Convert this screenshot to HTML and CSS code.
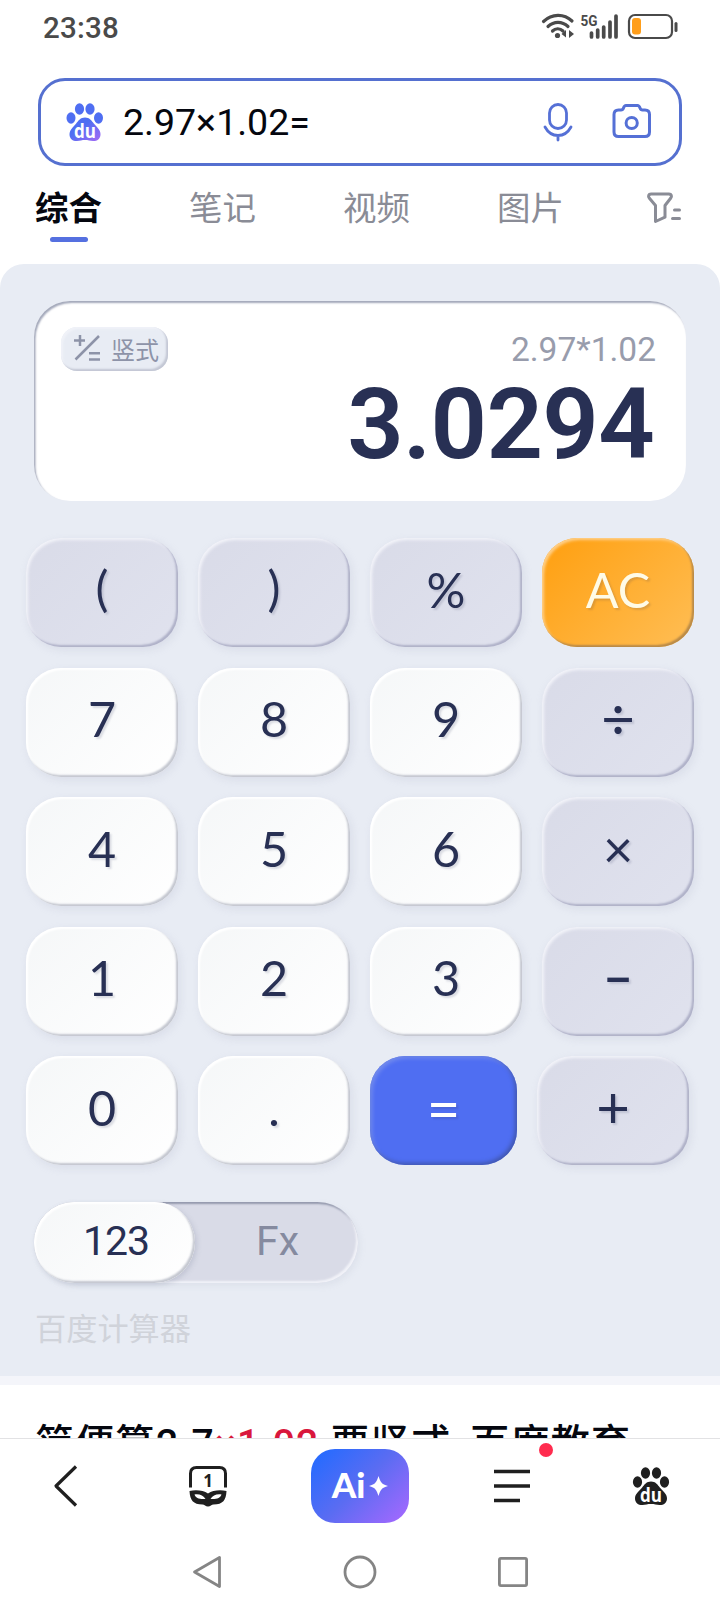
FILE: index.html
```html
<!DOCTYPE html>
<html lang="zh-CN">
<head>
    <meta charset="UTF-8">
    <meta name="viewport" content="width=device-width, initial-scale=1.0">
    <title>2.97×1.02= - 百度</title>
    <link rel="stylesheet" href="styles.css">
</head>
<body>
    <div class="app">
        <header class="status-bar">
            <span class="clock">23:38</span>
            <svg class="status-icons" width="140" height="30" viewBox="0 0 140 30">
                <g fill="none" stroke="#4a4a4a" stroke-width="3.2" stroke-linecap="round">
                    <path d="M2.5 9.5C11 1.5 23 1.5 31 9"/>
                    <path d="M7 14.5c6-5.5 14-5.5 20 0"/>
                    <path d="M11.500 19c3-3 7.500-3 10.500 0"/>
                </g>
                <circle cx="16.500" cy="23.500" r="2.600" fill="#4a4a4a"/>
                <path d="M25 18v7.500l-4.500-3.500zM28 18l5 4-5 4z" fill="#4a4a4a"/>
                <text class="net-label" x="39.500" y="13.500" textLength="17" lengthAdjust="spacingAndGlyphs">5G</text>
                <path d="M50.500 21v4M56.700 18v7M62.700 15v10M69 10v15M75 4v21" stroke="#4a4a4a" stroke-width="3.700" stroke-linecap="round"/>
                <rect x="88" y="3" width="43" height="23" rx="6" fill="none" stroke="#4a4a4a" stroke-width="2.200"/>
                <rect x="91" y="6" width="9" height="16.500" rx="3" fill="#ff9e1b"/>
                <path d="M135 11.500v7" stroke="#4a4a4a" stroke-width="3" stroke-linecap="round"/>
            </svg>
        </header>

        <div class="search-box">
            <svg class="paw" width="38" height="40" viewBox="0 0 38 40">
                <defs>
                    <linearGradient id="pawFill" x1="0" y1="0" x2="1" y2="1">
                        <stop offset="0.4" stop-color="#4f6ef2"/>
                        <stop offset="1" stop-color="#a56af5"/>
                    </linearGradient>
                </defs>
                <g fill="#4f6ef2">
                    <ellipse cx="13.500" cy="7" rx="4.600" ry="5.800"/>
                    <ellipse cx="24" cy="7" rx="4.600" ry="5.800"/>
                    <ellipse cx="5" cy="16" rx="4.500" ry="5.700"/>
                    <ellipse cx="32.500" cy="16" rx="4.500" ry="5.700"/>
                </g>
                <path d="M19 15.500c4.500 0 6.500 3 9 6.200 3 3.500 6.500 6.300 6.500 10.500 0 5-3.800 7-7.500 6.800-3-.2-5-.9-8-.9s-5 .7-8 .9c-3.700.2-7.500-1.800-7.500-6.800 0-4.200 3.500-7 6.500-10.500 2.500-3.200 4.500-6.200 9-6.200z" fill="url(#pawFill)"/>
                <text class="paw-text" x="8" y="35.500" textLength="22" lengthAdjust="spacingAndGlyphs">du</text>
            </svg>
            <span class="query">2.97×1.02=</span>
            <svg class="mic" width="32" height="40" viewBox="0 0 32 40">
                <g fill="none" stroke="#5570d6" stroke-width="2.800" stroke-linecap="round">
                    <rect x="7.500" y="2.500" width="17" height="24" rx="8.500"/>
                    <path d="M3 25c3 5.500 7.500 8.500 13 8.500S26 30.500 29 25M16 33.500v4.500"/>
                </g>
            </svg>
            <svg class="camera" width="40" height="38" viewBox="0 0 40 38">
                <g fill="none" stroke="#5570d6" stroke-width="3" stroke-linejoin="round">
                    <path d="M6.500 7H9c1.500 0 2-.5 2.500-2S12.500 2.500 14 2.500h11.500c1.500 0 2 1 2.500 2.500s1 2 2.500 2H33c3 0 4.500 1.500 4.500 4.500v17.500c0 3-1.500 4.500-4.500 4.500H6.500c-3 0-4.500-1.500-4.500-4.500V11.500C2 8.500 3.500 7 6.500 7z"/>
                    <circle cx="19.700" cy="20" r="5.600"/>
                </g>
            </svg>
        </div>

        <nav class="tabs">
            <span class="tab active">综合</span>
            <span class="tab">笔记</span>
            <span class="tab">视频</span>
            <span class="tab">图片</span>
            <svg class="filter" width="36" height="34" viewBox="0 0 36 34">
                <g fill="none" stroke="#8a8c96" stroke-width="3" stroke-linecap="round" stroke-linejoin="round">
                    <path d="M5 3h18c2.500 0 3 2.300 1.800 4L19 14.500v11.700l-9.500 4.300v-16L3.200 7C2 5.300 2.500 3 5 3z"/>
                    <path d="M28.500 19h5M26.500 27.500h7"/>
                </g>
            </svg>
        </nav>

        <main class="calculator">
            <section class="display">
                <div class="display-top">
                    <span class="chip">
                        <svg width="28" height="28" viewBox="0 0 28 28">
                            <path d="M7 1v11M1 6.500h11M2.500 25.500L26 2M16 19.300h11M16 25.500h11" fill="none" stroke="#8d93a8" stroke-width="2.500"/>
                        </svg>
                        竖式
                    </span>
                    <span class="expression">2.97*1.02</span>
                </div>
                <div class="result">3.0294</div>
            </section>

            <section class="keypad">
                <div class="key-row">
                    <span class="key op paren">(</span>
                    <span class="key op paren">)</span>
                    <span class="key op">%</span>
                    <span class="key clear">AC</span>
                </div>
                <div class="key-row">
                    <span class="key">7</span>
                    <span class="key">8</span>
                    <span class="key">9</span>
                    <span class="key op sign">÷</span>
                </div>
                <div class="key-row">
                    <span class="key">4</span>
                    <span class="key">5</span>
                    <span class="key">6</span>
                    <span class="key op times">×</span>
                </div>
                <div class="key-row">
                    <span class="key">1</span>
                    <span class="key">2</span>
                    <span class="key">3</span>
                    <span class="key op minus">−</span>
                </div>
                <div class="key-row">
                    <span class="key">0</span>
                    <span class="key">.</span>
                    <span class="key equals sign">=</span>
                    <span class="key op sign">+</span>
                </div>
            </section>

            <div class="mode-switch">
                <span class="mode selected">123</span>
                <span class="mode fx">Fx</span>
            </div>
            <div class="source">百度计算器</div>
        </main>

        <section class="next-result">
            <h3>简便算2.7<em>×1.02</em> 要竖式_百度教育</h3>
        </section>

        <nav class="toolbar">
            <svg class="tool" width="26" height="44" viewBox="0 0 26 44">
                <path d="M23 2.500L3 22l20 19.500" fill="none" stroke="#1f1f1f" stroke-width="3.200" stroke-linejoin="round"/>
            </svg>
            <svg class="tool" width="40" height="42" viewBox="0 0 40 42">
                <path d="M2.500 22.500V8.500c0-4 2-6 6-6h23c4 0 6 2 6 6v14" fill="none" stroke="#1f1f1f" stroke-width="3"/>
                <text class="tab-count" x="20" y="22" text-anchor="middle">1</text>
                <path fill-rule="evenodd" fill="#1f1f1f" d="M1.500 26c7-1.500 14-.5 18.500 2.500 4.500-3 11.500-4 18.500-2.500-.5 9-3.500 13.500-13 13.500-2 0-3 2-5.500 2s-3.500-2-5.500-2C5 39.500 2 35 1.500 26zM6.500 29.500c1 3.500 5 5 11 4.500C15.500 30.500 11 28.500 6.500 29.500zM33.500 29.500c-1 3.500-5 5-11 4.500 2-3.500 6.500-5.500 11-4.500z"/>
            </svg>
            <span class="ai-button">
                <span class="ai-text">Ai</span>
                <svg width="19" height="20" viewBox="0 0 19 20">
                    <path d="M9.500 0c1.800 6 3 8.200 9.500 10-6.500 1.800-7.700 4-9.500 10C7.700 14 6.500 11.800 0 10 6.500 8.200 7.700 6 9.500 0z" fill="#fff"/>
                </svg>
            </span>
            <span class="menu">
                <svg width="36" height="34" viewBox="0 0 36 34">
                    <path d="M0 2.500h36M0 17h36M0 31.500h26" stroke="#1f1f1f" stroke-width="3.600"/>
                </svg>
                <i class="badge"></i>
            </span>
            <svg class="tool home" width="38" height="40" viewBox="0 0 38 40">
                <g fill="#1f1f1f">
                    <ellipse cx="13.500" cy="7" rx="4.600" ry="5.800"/>
                    <ellipse cx="24.500" cy="7" rx="4.600" ry="5.800"/>
                    <ellipse cx="5.500" cy="16" rx="4.600" ry="5.700"/>
                    <ellipse cx="32.500" cy="16" rx="4.600" ry="5.700"/>
                    <path d="M19 15.500c4.500 0 6.500 3 9 6.200 3 3.500 7 6.300 7 10.500 0 5-3.800 7-7.500 6.800-3-.2-5-.9-8.500-.9s-5.500.7-8.500.9C6.800 39.200 3 37.200 3 32.200c0-4.200 4-7 7-10.500 2.500-3.200 4.500-6.200 9-6.200z"/>
                </g>
                <text class="paw-text" x="8" y="35.500" textLength="22" lengthAdjust="spacingAndGlyphs">du</text>
            </svg>
        </nav>

        <footer class="system-nav">
            <svg width="32" height="36" viewBox="0 0 32 36">
                <path d="M28.500 3.500v29L3.500 18z" fill="none" stroke="#858585" stroke-width="2.800" stroke-linejoin="round"/>
            </svg>
            <svg width="36" height="36" viewBox="0 0 36 36">
                <circle cx="18" cy="18" r="15" fill="none" stroke="#858585" stroke-width="2.800"/>
            </svg>
            <svg width="32" height="32" viewBox="0 0 32 32">
                <rect x="2.400" y="2.400" width="27.200" height="27.200" rx="1.500" fill="none" stroke="#858585" stroke-width="2.800"/>
            </svg>
        </footer>
    </div>
</body>
</html>
```
FILE: styles.css
```css
:root {
    --blue: #4f6ef2;
    --border-blue: #5570d0;
    --ink: #283054;
    --muted: #8a8c96;
    --panel: #e8ecf4;
    --cjk: "Noto Sans CJK SC", sans-serif;
}

* {
    box-sizing: border-box;
}

body {
    margin: 0;
    background: #fff;
    font-family: Roboto, var(--cjk);
}

svg {
    display: block;
    flex: none;
}

.app {
    width: 720px;
    height: 1612px;
    display: flex;
    flex-direction: column;
    overflow: hidden;
}

/* status bar */
.status-bar {
    height: 78px;
    padding: 12px 39px 0 43px;
    display: flex;
    justify-content: space-between;
}

.clock {
    font-size: 29.500px;
    line-height: 32px;
    font-weight: 500;
    letter-spacing: 0.2px;
    color: #4a4a4a;
}

.net-label {
    font: 700 15px Roboto, sans-serif;
    fill: #4a4a4a;
}

/* search */
.search-box {
    height: 88px;
    margin: 0 38px;
    padding: 0 27px 0 25px;
    border: 3px solid var(--border-blue);
    border-radius: 27px;
    display: flex;
    align-items: center;
    flex: none;
}

.paw-text {
    font: 700 19px "Open Sans", sans-serif;
    fill: #fff;
}

.query {
    flex: 1;
    margin-left: 19px;
    font-size: 37.500px;
    color: #05070f;
}

.camera {
    margin-left: 38px;
}

/* tabs */
.tabs {
    height: 98px;
    padding: 16px 38px 0 35px;
    display: flex;
    gap: 87px;
    flex: none;
}

.tab {
    height: 60px;
    flex: none;
    font-family: var(--cjk);
    font-size: 33.500px;
    line-height: 48px;
    white-space: nowrap;
    color: var(--muted);
}

.tab.active {
    font-weight: 700;
    color: #05070f;
}

.tab.active::after {
    content: "";
    display: block;
    width: 38px;
    height: 5px;
    margin: 7px auto 0;
    border-radius: 3px;
    background: #5570e0;
}

.filter {
    margin: 9px 0 0 -5px;
}

/* calculator */
.calculator {
    height: 1112px;
    padding: 37px 26px 0;
    border-radius: 24px 24px 0 0;
    background: var(--panel);
    flex: none;
}

.display {
    height: 200px;
    margin: 0 8px;
    padding: 26px 30px 0 27px;
    border-radius: 36px;
    background: #fff;
    box-shadow: inset 1.500px 2px 2px #a3a8ba;
}

.display-top {
    display: flex;
    justify-content: space-between;
}

.chip {
    width: 107px;
    height: 44px;
    padding: 0 0 2px 12px;
    border-radius: 16px;
    background: var(--panel);
    box-shadow: inset -2px -2px 2px #c3c7d4, inset 2px 2px 2px #f0f2f8;
    display: flex;
    align-items: center;
    gap: 10px;
    font-family: var(--cjk);
    font-size: 24px;
    color: #8d93a8;
}

.expression {
    font-size: 33.500px;
    line-height: 46px;
    color: #989cac;
}

.result {
    margin: 4px 2px 0 0;
    font-size: 99px;
    line-height: 94px;
    font-weight: 600;
    letter-spacing: -0.7px;
    text-align: right;
    color: var(--ink);
}

.keypad {
    margin-top: 37px;
    display: flex;
    flex-direction: column;
    gap: 20.500px;
}

.key-row {
    display: flex;
    gap: 20px;
}

.key {
    width: 152px;
    height: 109px;
    border-radius: 35px;
    background: linear-gradient(135deg, #f5f7f8, #fff);
    box-shadow: inset -2px -2px 2px #c4c7d0, inset 2px 2px 2px #fff, 2px 3px 8px rgba(160, 165, 190, 0.2);
    display: flex;
    align-items: center;
    justify-content: center;
    font-family: Lato, sans-serif;
    font-size: 48.500px;
    line-height: 1;
    padding-bottom: 7px;
    color: var(--ink);
    text-shadow: 2px 2px 2px rgba(40, 48, 84, 0.15);
}

.key.op {
    background: linear-gradient(135deg, #d9dbe8, #e0e2ee);
    box-shadow: inset -2px -2px 2px #afb1c8, inset 2px 2px 3px #f2f3f9, 2px 3px 8px rgba(160, 165, 190, 0.2);
}

.key.paren {
    padding-bottom: 11px;
}

.key.sign {
    font-size: 58px;
    padding-bottom: 9px;
}

.key.times {
    font-size: 52px;
    padding-bottom: 7px;
}

.key.minus {
    font-weight: 700;
}

.key.clear {
    background: linear-gradient(135deg, #ff9f0f, #ffbe55);
    box-shadow: inset -2px -2px 2px #b98a48, inset 2px 2px 3px #ffd08a;
    color: #fffbe6;
}

.key.equals {
    width: 147px;
    padding-bottom: 5px;
    background: var(--blue);
    box-shadow: inset -2px -2px 4px #4056ad, inset 2px 2px 4px #7890ee;
    color: #fff;
}

.mode-switch {
    width: 324px;
    height: 81px;
    margin: 37px 0 0 8px;
    border-radius: 41px;
    background: #d9dbe7;
    box-shadow: inset -2px -2px 2px #f1f2f8, inset 1px 2px 2px #9499ad, 2px 3px 6px rgba(160, 165, 190, 0.15);
    display: flex;
}

.mode {
    width: 161px;
    border-radius: 41px;
    font-size: 41px;
    line-height: 79px;
    text-align: center;
    color: #858a9f;
}

.mode.fx {
    padding-left: 4px;
}

.mode.selected {
    padding-left: 3px;
    background: linear-gradient(135deg, #f5f7f8, #fff);
    box-shadow: inset -2px -2px 2px #c4c7d0, inset 2px 2px 2px #fff, 2px 2px 5px rgba(140, 145, 170, 0.3);
    color: var(--ink);
    letter-spacing: -1px;
}

.source {
    margin: 21px 0 0 9px;
    font-family: var(--cjk);
    font-size: 31.200px;
    line-height: 46px;
    color: #d0d3da;
}

/* the next search result is cut off by the toolbar */
.next-result {
    height: 62px;
    padding: 0 35px;
    border-top: 9px solid #f4f5fa;
    overflow: hidden;
    flex: none;
}

.next-result h3 {
    margin: 30px 0 0;
    font-family: Roboto, var(--cjk);
    font-size: 39px;
    line-height: 58px;
    font-weight: 500;
    letter-spacing: 1.300px;
    white-space: nowrap;
    color: #05070f;
}

.next-result em {
    font-style: normal;
    color: #d9173c;
}

/* browser toolbar */
.toolbar {
    height: 96px;
    padding-bottom: 2px;
    border-top: 1px solid #e2e2e4;
    display: grid;
    grid-template-columns: 132px 152px 152px 152px 126px;
    align-items: center;
    justify-items: center;
    flex: none;
}

.tab-count {
    font: 700 17px "Noto Sans", sans-serif;
    fill: #1f1f1f;
}

.ai-button {
    width: 98px;
    height: 74px;
    border-radius: 24px;
    background: linear-gradient(135deg, #246bff 5%, #5b6cf2 50%, #a968ff);
    display: flex;
    align-items: center;
    justify-content: center;
    gap: 4px;
}

.ai-text {
    font-family: Lato, sans-serif;
    font-size: 35px;
    font-weight: 900;
    line-height: 1;
    padding-bottom: 2px;
    color: #fff;
}

.menu {
    position: relative;
}

.badge {
    position: absolute;
    top: -26px;
    right: -23px;
    width: 14px;
    height: 14px;
    border-radius: 50%;
    background: #ff2b4e;
}

.system-nav {
    flex: 1;
    padding-top: 20px;
    display: grid;
    grid-template-columns: repeat(3, 153px);
    justify-content: center;
    justify-items: center;
    align-items: center;
    align-content: start;
}
```
